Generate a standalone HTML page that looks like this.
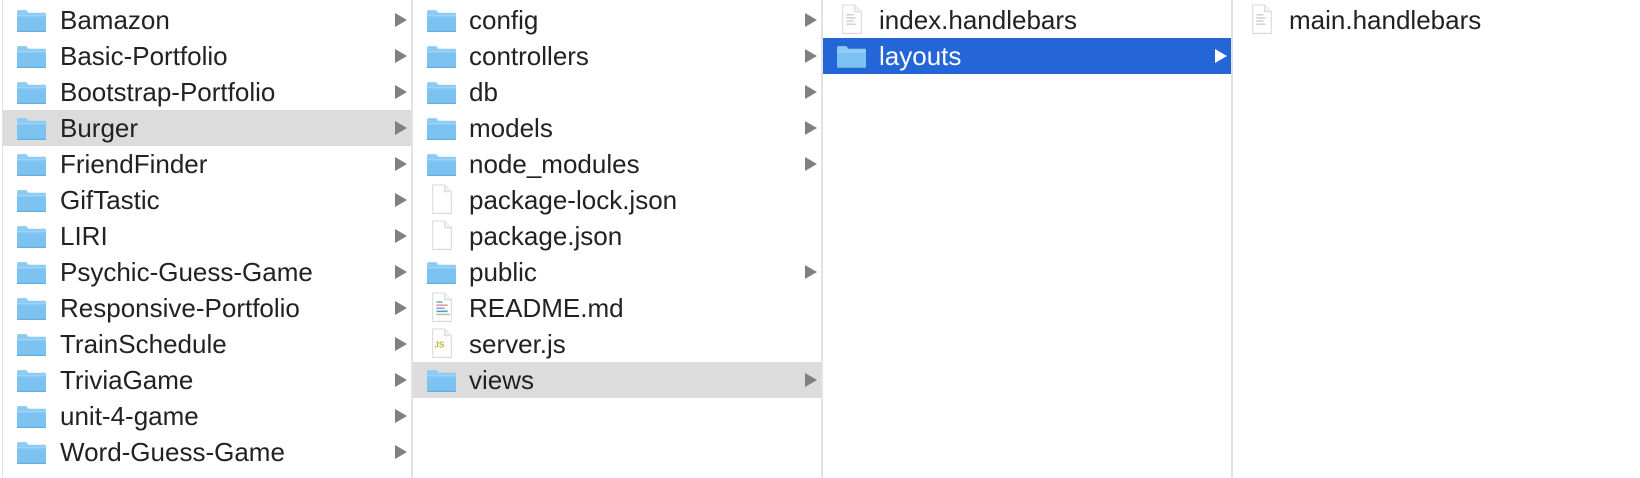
<!DOCTYPE html>
<html><head><meta charset="utf-8"><style>
html,body{margin:0;padding:0;background:#fff;width:1640px;height:478px;overflow:hidden;font-family:"Liberation Sans",Arial,sans-serif;}
.col{position:absolute;top:0;height:478px;}
.div{position:absolute;top:0;width:2px;height:478px;background:#e3e3e3;}
.row{position:absolute;left:0;right:0;height:36px;color:#222;font-size:26px;}
.row span{position:absolute;top:4px;line-height:28px;}
.row.sel{background:#dcdcdc;}
.row.blue{background:#2466d8;color:#fff;}
.ic{position:absolute;top:6px;}
.dc{position:absolute;top:2px;}
.ar{position:absolute;top:11px;width:0;height:0;border-top:7px solid transparent;border-bottom:7px solid transparent;border-left:12px solid #808080;}
.blue .ar{border-left-color:#fff;}
</style></head><body>
<div class="div" style="left:2px;width:1px"></div>
<div class="div" style="left:411px"></div>
<div class="div" style="left:821px"></div>
<div class="div" style="left:1231px"></div>
<svg width="0" height="0" style="position:absolute"><defs>
<symbol id="f" viewBox="0 0 30 24"><path d="M1 3.5Q1 2 2.5 2H10l2 2.5H28Q29 4.5 29 6V22Q29 23 28 23H2Q1 23 1 22Z" fill="#8ccbf4"/><path d="M1 7H29V22Q29 23 28 23H2Q1 23 1 22Z" fill="#7cc3f2"/><rect x="1" y="7" width="28" height="1" fill="#a6d8f8"/><rect x="1" y="22" width="28" height="1" fill="#5ea9dc"/></symbol>
<symbol id="d" viewBox="0 0 24 30"><path d="M3.5 1H15L21.5 7.5V28.5H3.5Z" fill="#fff" stroke="#d8d8d8"/><path d="M15 1V7.5H21.5" fill="#f2f2f2" stroke="#d8d8d8"/></symbol>
</defs></svg>

<div class="col" style="left:3px;width:408px">
<div class="row" style="top:2px"><svg class="ic" style="left:13px" width="31" height="25"><use href="#f"/></svg><span style="left:57px">Bamazon</span><i class="ar" style="left:392px"></i></div>
<div class="row" style="top:38px"><svg class="ic" style="left:13px" width="31" height="25"><use href="#f"/></svg><span style="left:57px">Basic-Portfolio</span><i class="ar" style="left:392px"></i></div>
<div class="row" style="top:74px"><svg class="ic" style="left:13px" width="31" height="25"><use href="#f"/></svg><span style="left:57px">Bootstrap-Portfolio</span><i class="ar" style="left:392px"></i></div>
<div class="row sel" style="top:110px"><svg class="ic" style="left:13px" width="31" height="25"><use href="#f"/></svg><span style="left:57px">Burger</span><i class="ar" style="left:392px"></i></div>
<div class="row" style="top:146px"><svg class="ic" style="left:13px" width="31" height="25"><use href="#f"/></svg><span style="left:57px">FriendFinder</span><i class="ar" style="left:392px"></i></div>
<div class="row" style="top:182px"><svg class="ic" style="left:13px" width="31" height="25"><use href="#f"/></svg><span style="left:57px">GifTastic</span><i class="ar" style="left:392px"></i></div>
<div class="row" style="top:218px"><svg class="ic" style="left:13px" width="31" height="25"><use href="#f"/></svg><span style="left:57px">LIRI</span><i class="ar" style="left:392px"></i></div>
<div class="row" style="top:254px"><svg class="ic" style="left:13px" width="31" height="25"><use href="#f"/></svg><span style="left:57px">Psychic-Guess-Game</span><i class="ar" style="left:392px"></i></div>
<div class="row" style="top:290px"><svg class="ic" style="left:13px" width="31" height="25"><use href="#f"/></svg><span style="left:57px">Responsive-Portfolio</span><i class="ar" style="left:392px"></i></div>
<div class="row" style="top:326px"><svg class="ic" style="left:13px" width="31" height="25"><use href="#f"/></svg><span style="left:57px">TrainSchedule</span><i class="ar" style="left:392px"></i></div>
<div class="row" style="top:362px"><svg class="ic" style="left:13px" width="31" height="25"><use href="#f"/></svg><span style="left:57px">TriviaGame</span><i class="ar" style="left:392px"></i></div>
<div class="row" style="top:398px"><svg class="ic" style="left:13px" width="31" height="25"><use href="#f"/></svg><span style="left:57px">unit-4-game</span><i class="ar" style="left:392px"></i></div>
<div class="row" style="top:434px"><svg class="ic" style="left:13px" width="31" height="25"><use href="#f"/></svg><span style="left:57px">Word-Guess-Game</span><i class="ar" style="left:392px"></i></div>
</div>

<div class="col" style="left:413px;width:408px">
<div class="row" style="top:2px"><svg class="ic" style="left:13px" width="31" height="25"><use href="#f"/></svg><span style="left:56px">config</span><i class="ar" style="left:392px"></i></div>
<div class="row" style="top:38px"><svg class="ic" style="left:13px" width="31" height="25"><use href="#f"/></svg><span style="left:56px">controllers</span><i class="ar" style="left:392px"></i></div>
<div class="row" style="top:74px"><svg class="ic" style="left:13px" width="31" height="25"><use href="#f"/></svg><span style="left:56px">db</span><i class="ar" style="left:392px"></i></div>
<div class="row" style="top:110px"><svg class="ic" style="left:13px" width="31" height="25"><use href="#f"/></svg><span style="left:56px">models</span><i class="ar" style="left:392px"></i></div>
<div class="row" style="top:146px"><svg class="ic" style="left:13px" width="31" height="25"><use href="#f"/></svg><span style="left:56px">node_modules</span><i class="ar" style="left:392px"></i></div>
<div class="row" style="top:182px"><svg class="dc" style="left:16px" width="25" height="31"><use href="#d"/></svg><span style="left:56px">package-lock.json</span></div>
<div class="row" style="top:218px"><svg class="dc" style="left:16px" width="25" height="31"><use href="#d"/></svg><span style="left:56px">package.json</span></div>
<div class="row" style="top:254px"><svg class="ic" style="left:13px" width="31" height="25"><use href="#f"/></svg><span style="left:56px">public</span><i class="ar" style="left:392px"></i></div>
<div class="row" style="top:290px"><svg class="dc" style="left:16px" width="25" height="31" viewBox="0 0 24 30"><use href="#d"/><rect x="7" y="9" width="6" height="1.5" fill="#7aa"/><rect x="7" y="12" width="11" height="1.5" fill="#d99"/><rect x="7" y="15" width="8" height="1.5" fill="#a8f"/><rect x="7" y="18" width="11" height="1.5" fill="#4aa"/><rect x="7" y="21" width="13" height="1.5" fill="#bbb"/></svg><span style="left:56px">README.md</span></div>
<div class="row" style="top:326px"><svg class="dc" style="left:16px" width="25" height="31" viewBox="0 0 24 30"><use href="#d"/><text x="5" y="19" font-size="8" font-weight="bold" fill="#b9b340" font-family="Liberation Sans,sans-serif">JS</text></svg><span style="left:56px">server.js</span></div>
<div class="row sel" style="top:362px"><svg class="ic" style="left:13px" width="31" height="25"><use href="#f"/></svg><span style="left:56px">views</span><i class="ar" style="left:392px"></i></div>
</div>

<div class="col" style="left:823px;width:408px">
<div class="row" style="top:2px"><svg class="dc" style="left:16px" width="25" height="31" viewBox="0 0 24 30"><use href="#d"/><rect x="7" y="10" width="7" height="1" fill="#bbb"/><rect x="7" y="13" width="9" height="1" fill="#bbb"/><rect x="7" y="16" width="7" height="1" fill="#bbb"/><rect x="7" y="19" width="9" height="1" fill="#bbb"/></svg><span style="left:56px">index.handlebars</span></div>
<div class="row blue" style="top:38px"><svg class="ic" style="left:13px" width="31" height="25"><use href="#f"/></svg><span style="left:56px">layouts</span><i class="ar" style="left:392px"></i></div>
</div>

<div class="col" style="left:1233px;width:407px">
<div class="row" style="top:2px"><svg class="dc" style="left:16px" width="25" height="31" viewBox="0 0 24 30"><use href="#d"/><rect x="7" y="10" width="7" height="1" fill="#bbb"/><rect x="7" y="13" width="9" height="1" fill="#bbb"/><rect x="7" y="16" width="7" height="1" fill="#bbb"/><rect x="7" y="19" width="9" height="1" fill="#bbb"/></svg><span style="left:56px">main.handlebars</span></div>
</div>
</body></html>
